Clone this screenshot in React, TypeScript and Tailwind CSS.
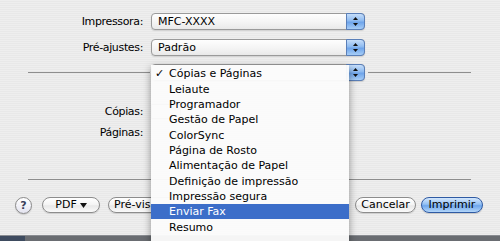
import React from "react";

function Arrows() {
  return (
    <svg width="7" height="11" viewBox="0 0 7 11">
      <path d="M3.5 1 L6 4 L1 4 Z" fill="#111" />
      <path d="M3.5 10 L6 7 L1 7 Z" fill="#111" />
    </svg>
  );
}

function Popup({ text }: { text: string }) {
  return (
    <div className="flex h-[17px] w-[214px] items-stretch rounded-[4px] border border-[#9a9a9a] bg-[linear-gradient(#fefefe,#f3f3f3_60%,#e9e9e9)] shadow-[0_1px_1px_rgba(0,0,0,0.12)]">
      <div className="flex-1 pl-[6px] leading-[15px] text-black">{text}</div>
      <div className="-my-px -mr-px flex w-[19px] items-center justify-center rounded-r-[4px] border border-[#5a7fb8] bg-[linear-gradient(#c6defa,#8dbaf0_45%,#6ea4ea_55%,#a6cdf7)]">
        <Arrows />
      </div>
    </div>
  );
}

function Pill({
  children,
  w,
  primary,
}: {
  children: React.ReactNode;
  w: string;
  primary?: boolean;
}) {
  return (
    <div
      className={
        primary
          ? `flex h-[16px] ${w} items-center justify-center rounded-full border border-[#2f5aa3] bg-[linear-gradient(#d4e7fc,#93c0f3_45%,#6ea6ec_55%,#b3d6f9)] leading-[14px] text-black shadow-[0_1px_1px_rgba(0,0,0,0.15)]`
          : `flex h-[16px] ${w} items-center justify-center overflow-hidden rounded-full border border-[#8c8c8c] bg-[linear-gradient(#ffffff,#f4f4f4_50%,#e8e8e8_55%,#fafafa)] leading-[14px] text-black shadow-[0_1px_1px_rgba(0,0,0,0.12)]`
      }
    >
      {children}
    </div>
  );
}

const items = [
  "Cópias e Páginas",
  "Leiaute",
  "Programador",
  "Gestão de Papel",
  "ColorSync",
  "Página de Rosto",
  "Alimentação de Papel",
  "Definição de impressão",
  "Impressão segura",
  "Enviar Fax",
  "Resumo",
];

export default function App() {
  return (
    <div className="relative flex h-[241px] w-[500px] flex-col overflow-hidden bg-[#ececec] bg-[image:repeating-linear-gradient(0deg,#eeeeee_0px,#eeeeee_1px,#e8e8e8_1px,#e8e8e8_2px)] font-['DejaVu_Sans',sans-serif] text-[11px] text-black">
      {/* top selectors */}
      <div className="flex flex-col gap-[9px] pt-[13px]">
        <div className="flex h-[17px] items-center">
          <div className="w-[143px] text-right leading-[17px] tracking-[-0.35px]">Impressora:</div>
          <div className="ml-[8px]">
            <Popup text="MFC-XXXX" />
          </div>
        </div>
        <div className="flex h-[17px] items-center">
          <div className="w-[143px] text-right leading-[17px] tracking-[-0.35px]">Pré-ajustes:</div>
          <div className="ml-[8px]">
            <Popup text="Padrão" />
          </div>
        </div>
      </div>

      {/* panel selector with separator lines (its label is hidden under the open menu) */}
      <div className="mt-[8px] flex h-[17px] items-center">
        <div className="ml-[28px] h-px w-[122px] bg-[#8e8e8e]" />
        <div className="ml-px">
          <Popup text="" />
        </div>
        <div className="ml-[3px] h-px w-[103px] bg-[#8e8e8e]" />
      </div>

      {/* panel content */}
      <div className="mt-[22px] flex h-[17px] items-center">
        <div className="w-[143px] text-right leading-[17px] tracking-[-0.35px]">Cópias:</div>
        <div className="ml-[8px] h-[15px] w-[30px] border border-[#9a9a9a] bg-white" />
      </div>
      <div className="mt-[4px] flex h-[17px] items-center">
        <div className="w-[143px] text-right leading-[17px] tracking-[-0.35px]">Páginas:</div>
      </div>

      {/* bottom separator */}
      <div className="ml-[28px] mt-[38px] h-px w-[443px] bg-[#8e8e8e]" />

      {/* buttons */}
      <div className="mt-[17px] flex h-[16px] items-center">
        <div className="ml-[15px] flex h-[17px] w-[17px] items-center justify-center rounded-full border border-[#8a8a8a] bg-[linear-gradient(#ffffff,#e4e4f0)] text-[11px] font-bold leading-none text-[#3a3f5a] shadow-[0_1px_1px_rgba(0,0,0,0.15)]">
          ?
        </div>
        <div className="ml-[10px]">
          <Pill w="w-[58px]">
            <span>PDF</span>
            <svg width="7" height="5" viewBox="0 0 7 5" className="ml-[3px]">
              <path d="M0 0 L7 0 L3.5 5 Z" fill="#111" />
            </svg>
          </Pill>
        </div>
        <div className="ml-[8px]">
          <Pill w="w-[90px]">
            <span className="w-full pl-[5px] text-left">Pré-vis</span>
          </Pill>
        </div>
        <div className="ml-auto">
          <Pill w="w-[61px]">Cancelar</Pill>
        </div>
        <div className="ml-[5px] mr-[17px]">
          <Pill w="w-[62px]" primary>
            Imprimir
          </Pill>
        </div>
      </div>

      <div className="flex-1" />
      {/* dock strip */}
      <div className="flex h-[6px] border-t border-[#8a8d92]">
        <div className="w-[25px] bg-[#3e4b5f]" />
        <div className="flex-1 bg-[#6a6d72]" />
      </div>

      {/* open popup menu */}
      <div className="absolute left-[151px] top-[65px] h-[190px] w-[198px] bg-[rgba(251,251,251,0.96)] pt-[1px] shadow-[0_3px_8px_rgba(0,0,0,0.4)]">
        {items.map((it, i) => {
          const hi = it === "Enviar Fax";
          return (
            <div
              key={it}
              className={
                hi
                  ? "flex h-[15.35px] items-center bg-[#3c6ec9] leading-[15px] text-white"
                  : "flex h-[15.35px] items-center leading-[15px] text-black"
              }
            >
              <span className="w-[18px] pl-[4px] text-[11px]">{i === 0 ? "✓" : ""}</span>
              <span>{it}</span>
            </div>
          );
        })}
      </div>
    </div>
  );
}
